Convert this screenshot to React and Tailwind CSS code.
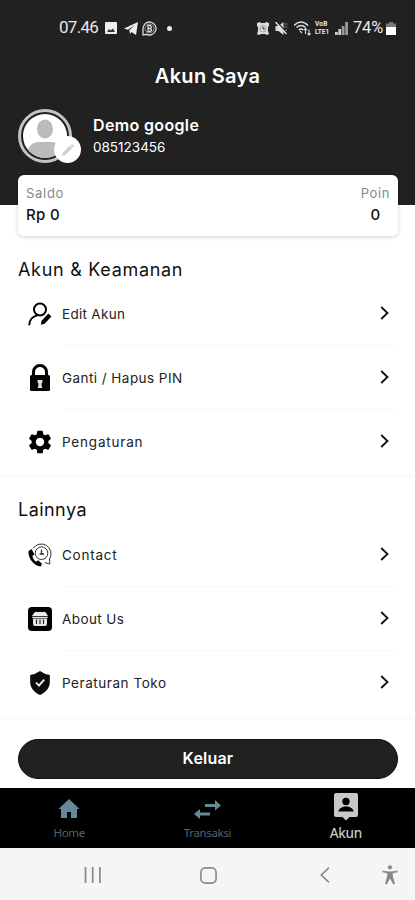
import React from 'react';

const EditUserIcon = () => (
  <svg className="w-6 h-6" viewBox="0 0 24 24" fill="none" stroke="#000" strokeWidth="2">
    <circle cx="12" cy="7.5" r="6" />
    <path d="M1.2 23.2c.2-5.4 3.2-8.600 8-9.800" />
    <path d="M12.800 22.800l.8-4 6.800-7.200 3 2.900-6.800 7.300z" fill="#000" stroke="none" />
  </svg>
);

const LockIcon = () => (
  <svg className="w-6 h-7" viewBox="0 0 24 28">
    <path d="M5.5 13V8a6.5 6.5 0 0 1 13 0v5" fill="none" stroke="#000" strokeWidth="3" />
    <rect x="2" y="11" width="20" height="16" rx="1.5" fill="#000" />
    <path d="M9.6 16h4.8v2.8l-1 1 .9 4.2H9.7l.9-4.2-1-1z" fill="#ddd" />
  </svg>
);

const GearIcon = () => (
  <svg className="w-7 h-7" viewBox="0 0 24 24">
    <path
      fill="#000"
      d="M19.14 12.94c.04-.3.06-.61.06-.94s-.02-.64-.07-.94l2.03-1.58a.49.49 0 0 0 .12-.61l-1.92-3.32a.49.49 0 0 0-.59-.22l-2.39.96a7 7 0 0 0-1.62-.94l-.36-2.54a.48.48 0 0 0-.48-.41h-3.84a.48.48 0 0 0-.47.41l-.36 2.54c-.59.24-1.13.57-1.62.94l-2.39-.96a.48.48 0 0 0-.59.22L2.74 8.87a.48.48 0 0 0 .12.61l2.03 1.58a7 7 0 0 0 0 1.88l-2.03 1.58a.49.49 0 0 0-.12.61l1.92 3.32c.12.22.37.29.59.22l2.39-.96c.5.38 1.03.7 1.62.94l.36 2.54c.05.24.24.41.48.41h3.84c.24 0 .44-.17.47-.41l.36-2.54a7 7 0 0 0 1.62-.94l2.39.96c.22.08.47 0 .59-.22l1.92-3.32a.48.48 0 0 0-.12-.61zM12 15.6a3.6 3.6 0 1 1 0-7.2 3.6 3.6 0 0 1 0 7.2z"
    />
  </svg>
);

const ContactIcon = () => (
  <svg className="w-6 h-6" viewBox="0 0 24 24" fill="none" stroke="#333">
    <path d="M5 5.5A9.6 9.6 0 0 1 21.5 16l.3 5-5-1.4" strokeWidth="1" />
    <circle cx="13.5" cy="10.2" r="6.3" strokeWidth="1" />
    <path d="M13.5 6.500v4.500h2.500M11.500 11h2" strokeWidth="1.3" />
    <path
      d="M3.6 6L.6 8C-.4 15 5.8 22.8 12.6 23.400l1.400-2.600-3.800-3.500-2.200 1.400c-1.600-1.200-3.200-3.400-3.600-5.700l2-1.500z"
      fill="#000"
      stroke="none"
    />
  </svg>
);

const StoreIcon = () => (
  <svg className="w-6 h-6" viewBox="0 0 24 24">
    <rect width="24" height="24" rx="4" fill="#000" />
    <path d="M6.5 5.5Q8 4 10 5.3q2-1.3 4 0 2-1.3 3.8.2L20 9H4z" fill="#eee" />
    <path d="M4 9.7h16l-.8 1.8H4.8zM5 12h14v5a2 2 0 0 1-2 2H7a2 2 0 0 1-2-2z" fill="#e4e4e4" />
    <path d="M8.5 12.5v4.500M12 12.5v4.500M15.5 12.5v4.500" stroke="#222" strokeWidth="1.1" />
  </svg>
);

const ShieldIcon = () => (
  <svg className="w-6 h-6" viewBox="0 0 24 24">
    <path d="M12 0q5 3.500 9.800 4v7c0 6-4 10.500-9.800 13C6.200 21.500 2.200 17 2.200 11V4Q7 3.500 12 0z" fill="#0b0b0b" />
    <path d="M8 11.600l3 3 5.200-6" fill="none" stroke="#eee" strokeWidth="2" />
  </svg>
);

const sections = [
  {
    title: 'Akun & Keamanan',
    items: [
      { label: 'Edit Akun', icon: <EditUserIcon />, textClass: 'tracking-[0.3px]' },
      { label: 'Ganti / Hapus PIN', icon: <LockIcon />, textClass: 'tracking-[0.45px]' },
      { label: 'Pengaturan', icon: <GearIcon />, textClass: 'tracking-[0.8px]' },
    ],
  },
  {
    title: 'Lainnya',
    items: [
      { label: 'Contact', icon: <ContactIcon />, textClass: 'tracking-[0.75px]' },
      { label: 'About Us', icon: <StoreIcon />, textClass: 'tracking-[0.4px]' },
      { label: 'Peraturan Toko', icon: <ShieldIcon />, textClass: 'tracking-[0.55px]' },
    ],
  },
];

const StatusBar = () => (
  <div className="flex items-center justify-between h-14 pl-[59px] pr-[19px] text-[#e8e8e8] font-['Roboto',sans-serif]">
    <div className="flex items-center">
      <span className="w-[46px] text-[17px] whitespace-nowrap tracking-[-0.7px]">07.46</span>
      <svg className="w-3 h-3" viewBox="0 0 12 12">
        <rect width="12" height="12" rx="1" fill="#eee" />
        <path d="M2 10l2-3 1.5 1.5L8 6.5 10 10z" fill="#333" />
      </svg>
      <svg className="w-[14px] h-[13px] ml-[7px]" viewBox="0 0 14 13">
        <path d="M0 6.500L14 0l-2 13-4.500-3L6 12l-.7-3.700L11 3 4 7.800z" fill="#eee" />
      </svg>
      <svg className="w-[15px] h-[15px] ml-1" viewBox="0 0 15 15" fill="none" stroke="#ddd">
        <path d="M1 14V7.300a6.500 6.500 0 1 1 3.500 6z" strokeWidth="1.3" />
        <circle cx="7.5" cy="7.5" r="4.5" strokeWidth=".6" />
        <path d="M6 4.500v6h2a1.500 1.500 0 0 0 0-3H6h1.800a1.500 1.500 0 0 0 0-3z" strokeWidth="1.3" />
      </svg>
      <span className="w-[5px] h-[5px] ml-[10px] rounded-full bg-[#eee]" />
    </div>
    <div className="flex items-center">
      <svg className="w-3 h-[13px]" viewBox="0 0 12 13">
        <path d="M0 1l3-1 1 1h4l1-1 3 1v3l-1 1v4l1 3-2 1-2-1H4l-2 1-2-1 1-3V5L0 4z" fill="#ddd" />
        <circle cx="6" cy="6.8" r="3.2" fill="none" stroke="#777" strokeWidth=".6" />
        <path d="M6 4.800v2.200h1.800" fill="none" stroke="#333" />
      </svg>
      <svg className="w-[13px] h-[13px] ml-[6px]" viewBox="0 0 12 13">
        <path d="M0 4h3l5-4v13L3 9H0z" fill="#ddd" />
        <path d="M1 0l11 12" stroke="#212121" strokeWidth="2" />
        <path d="M0 0l11 12" stroke="#eee" strokeWidth="1.3" />
        <path d="M9 2h3M9 5h3M10 8h2" stroke="#aaa" strokeDasharray="1.5 .7" />
      </svg>
      <svg className="w-[17px] h-[15px] ml-[6px]" viewBox="0 0 17 15" fill="none" stroke="#ddd">
        <path d="M0 4.500Q7 -2.500 14 4.500M2.500 6.500q4.500-4 9 0M4.800 9q2.200-2 4.400 0" strokeWidth="1.5" />
        <path d="M6 10l2 2M11.500 13V7.500M10 9l1.500-1.500L13 9M15 8.500V14M13.500 12.500L15 14l1.500-1.500" strokeWidth="1.1" />
      </svg>
      <span className="flex flex-col w-[17px] ml-1 text-[6.5px] leading-[8px] font-bold whitespace-nowrap tracking-[0.2px]">
        <span>VoB</span>
        <span className="tracking-[0px]">LTE1</span>
      </span>
      <svg className="w-[13px] h-[13px] ml-[3px]" viewBox="0 0 13 13">
        <path d="M0 10h2.800v3H0zM3.300 7h2.800v6H3.300z" fill="#ccc" />
        <path d="M6.700 4h2.800v9H6.700zM10.200 0H13v13h-2.800z" fill="#999" />
      </svg>
      <span className="w-[33px] ml-[5px] text-[16.5px] whitespace-nowrap tracking-[-0.2px]">74%</span>
      <svg className="w-[10px] h-[13px]" viewBox="0 0 10 13">
        <path d="M3 0h4v1.500h3V13H0V1.500h3z" fill="#777" />
        <path d="M0 5h10v8H0z" fill="#fff" />
      </svg>
    </div>
  </div>
);

const MenuRow = ({ item, last }) => (
  <div className="flex h-16 pl-[26px] pr-[17px]">
    <div className="flex items-center justify-center w-7 mr-2">{item.icon}</div>
    <div
      className={`flex flex-1 items-center justify-between pr-[9px] border-b ${last ? 'border-transparent' : 'border-[#f9f9f9]'}`}
    >
      <span className={`pt-[2px] text-[13.5px] text-[#222] whitespace-nowrap ${item.textClass}`}>{item.label}</span>
      <svg className="w-[9px] h-[14px] mb-px" viewBox="0 0 9 14" fill="none" stroke="#111" strokeWidth="1.8">
        <path d="M1.200 1l6.300 6-6.300 6" />
      </svg>
    </div>
  </div>
);

const App = () => {
  return (
    <div className="flex flex-col w-[415px] h-[900px] overflow-hidden bg-white font-['Inter',sans-serif]">
      <header className="h-[205px] shrink-0 bg-[#212121] text-white">
        <StatusBar />
        <h1 className="h-10 text-center text-[20px] leading-10 font-semibold tracking-[0.3px]">Akun Saya</h1>
        <div className="flex items-center h-20 pl-[18px]">
          <div className="relative w-[54px] h-[54px] mr-[21px] rounded-full border-[3px] border-[#c4c4c4] p-[2px]">
            <svg className="w-full h-full" viewBox="0 0 44 44">
              <clipPath id="avatar">
                <circle cx="22" cy="22" r="22" />
              </clipPath>
              <g clipPath="url(#avatar)">
                <rect width="44" height="44" fill="#fff" />
                <ellipse cx="22" cy="15" rx="8" ry="9.5" fill="#b9bbbd" />
                <path d="M4 42c0-10 6-14 12-14h12c6 0 12 4 12 14v4H4z" fill="#b9bbbd" />
              </g>
            </svg>
            <span className="absolute left-[33px] top-[24px] flex items-center justify-center w-[27px] h-[27px] rounded-full bg-white">
              <svg className="w-3 h-3" viewBox="0 0 12 12">
                <path d="M0 12l.7-3L8 1.500l2.500 2.500L3 11.300zM8.800.8L10 0l2 2-.9 1.200z" fill="#cfcfcf" />
              </svg>
            </span>
          </div>
          <div>
            <p className="text-[16px] leading-[22px] font-semibold tracking-[0.35px]">Demo google</p>
            <p className="text-[13.5px] leading-[22px]">085123456</p>
          </div>
        </div>
      </header>

      <div className="relative flex justify-between h-[61px] shrink-0 ml-[18px] mr-[17px] -mt-[30px] px-2 pt-2 rounded-md bg-white shadow-[0_1px_4px_rgba(0,0,0,0.18)]">
        <div>
          <p className="text-[13px] leading-5 text-[#888] tracking-[0.7px]">Saldo</p>
          <p className="text-[15px] leading-6 font-medium text-[#111] tracking-[0.3px]">Rp 0</p>
        </div>
        <div className="text-center">
          <p className="text-[13px] leading-5 text-[#888] tracking-[0.6px]">Poin</p>
          <p className="text-[15px] leading-6 font-medium text-[#111]">0</p>
        </div>
      </div>

      <main className="flex flex-col flex-1 pt-[22px]">
        {sections.map((section, i) => (
          <section key={section.title} className={i > 0 ? 'pt-5' : ''}>
            <h2
              className={`h-6 pl-[18px] text-[18px] text-[#111] whitespace-nowrap ${i > 0 ? 'leading-[22px] tracking-[0.45px]' : 'leading-6 tracking-[0.7px]'}`}
            >
              {section.title}
            </h2>
            {section.items.map((item, j) => (
              <MenuRow key={item.label} item={item} last={j === section.items.length - 1} />
            ))}
            <div className="h-[5px] bg-[#fcfcfc]" />
          </section>
        ))}
        <button className="h-10 ml-[18px] mr-[17px] mt-[19px] pb-[2px] rounded-full bg-[#212121] border border-[#111] text-[16px] leading-9 font-semibold text-white tracking-[0.2px]">
          Keluar
        </button>
      </main>

      <nav className="grid grid-cols-3 h-[60px] shrink-0 bg-black text-center font-['Noto_Sans',sans-serif]">
        <div className="flex flex-col items-center pt-[9px] text-[#53646e]">
          <svg className="w-6 h-6" viewBox="0 0 24 24">
            <path d="M10 21v-6h4v6h6v-9h2.500L12 2 1.500 12H4v9z" fill="#66899a" />
          </svg>
          <span className="text-[11.5px] leading-6 tracking-[-0.4px]">Home</span>
        </div>
        <div className="flex flex-col items-center pt-[9px] text-[#53646e]">
          <svg className="w-[27px] h-6" viewBox="0 0 27 24">
            <path d="M11 7h10V3l6 5.500-6 5V10H11zM16 15.500H6V12l-6 5 6 5v-3.500h10z" fill="#66899a" />
          </svg>
          <span className="text-[11.5px] leading-6 tracking-[-0.35px]">Transaksi</span>
        </div>
        <div className="flex flex-col items-center pt-[5px] text-[#c8c8c8]">
          <svg className="w-6 h-[28px]" viewBox="0 0 24 28">
            <path d="M2 0h20a2 2 0 0 1 2 2v20a2 2 0 0 1-2 2h-6.500L12 27.500 8.500 24H2a2 2 0 0 1-2-2V2a2 2 0 0 1 2-2z" fill="#c8c8c8" />
            <circle cx="12" cy="8.5" r="3.7" fill="#000" />
            <path d="M4.500 18.500c0-3 4-5 7.500-5s7.500 2 7.500 5z" fill="#000" />
          </svg>
          <span className="text-[13.5px] leading-6 font-medium tracking-[-0.3px]">Akun</span>
        </div>
      </nav>

      <div className="flex items-center h-[52px] shrink-0 pl-[84px] pr-[17px] pt-[2px] bg-[#f5f5f5]">
        <svg className="w-[17px] h-4" viewBox="0 0 17 16" stroke="#888" strokeWidth="1.7">
          <path d="M1.500 0v16M8.700 0v16M15.900 0v16" />
        </svg>
        <svg className="w-[17px] h-[17px] ml-[99px]" viewBox="0 0 17 17" fill="none" stroke="#888" strokeWidth="1.6">
          <rect x=".9" y=".9" width="15.2" height="15.2" rx="4.5" />
        </svg>
        <svg className="w-[10px] h-4 ml-[103px]" viewBox="0 0 10 16" fill="none" stroke="#888" strokeWidth="1.6">
          <path d="M9 .7L1.300 8 9 15.300" />
        </svg>
        <svg className="w-4 h-5 ml-auto" viewBox="0 0 16 20" fill="#888">
          <circle cx="8" cy="2.3" r="2.1" />
          <path d="M.5 5.500q7.500 1.800 15 0v1.700l-4.700 1v3L13 18.700l-1.700.8L8 13.500l-3.300 6-1.700-.8 2.200-7.500v-3l-4.700-1z" />
        </svg>
      </div>
    </div>
  );
};

export default App;
